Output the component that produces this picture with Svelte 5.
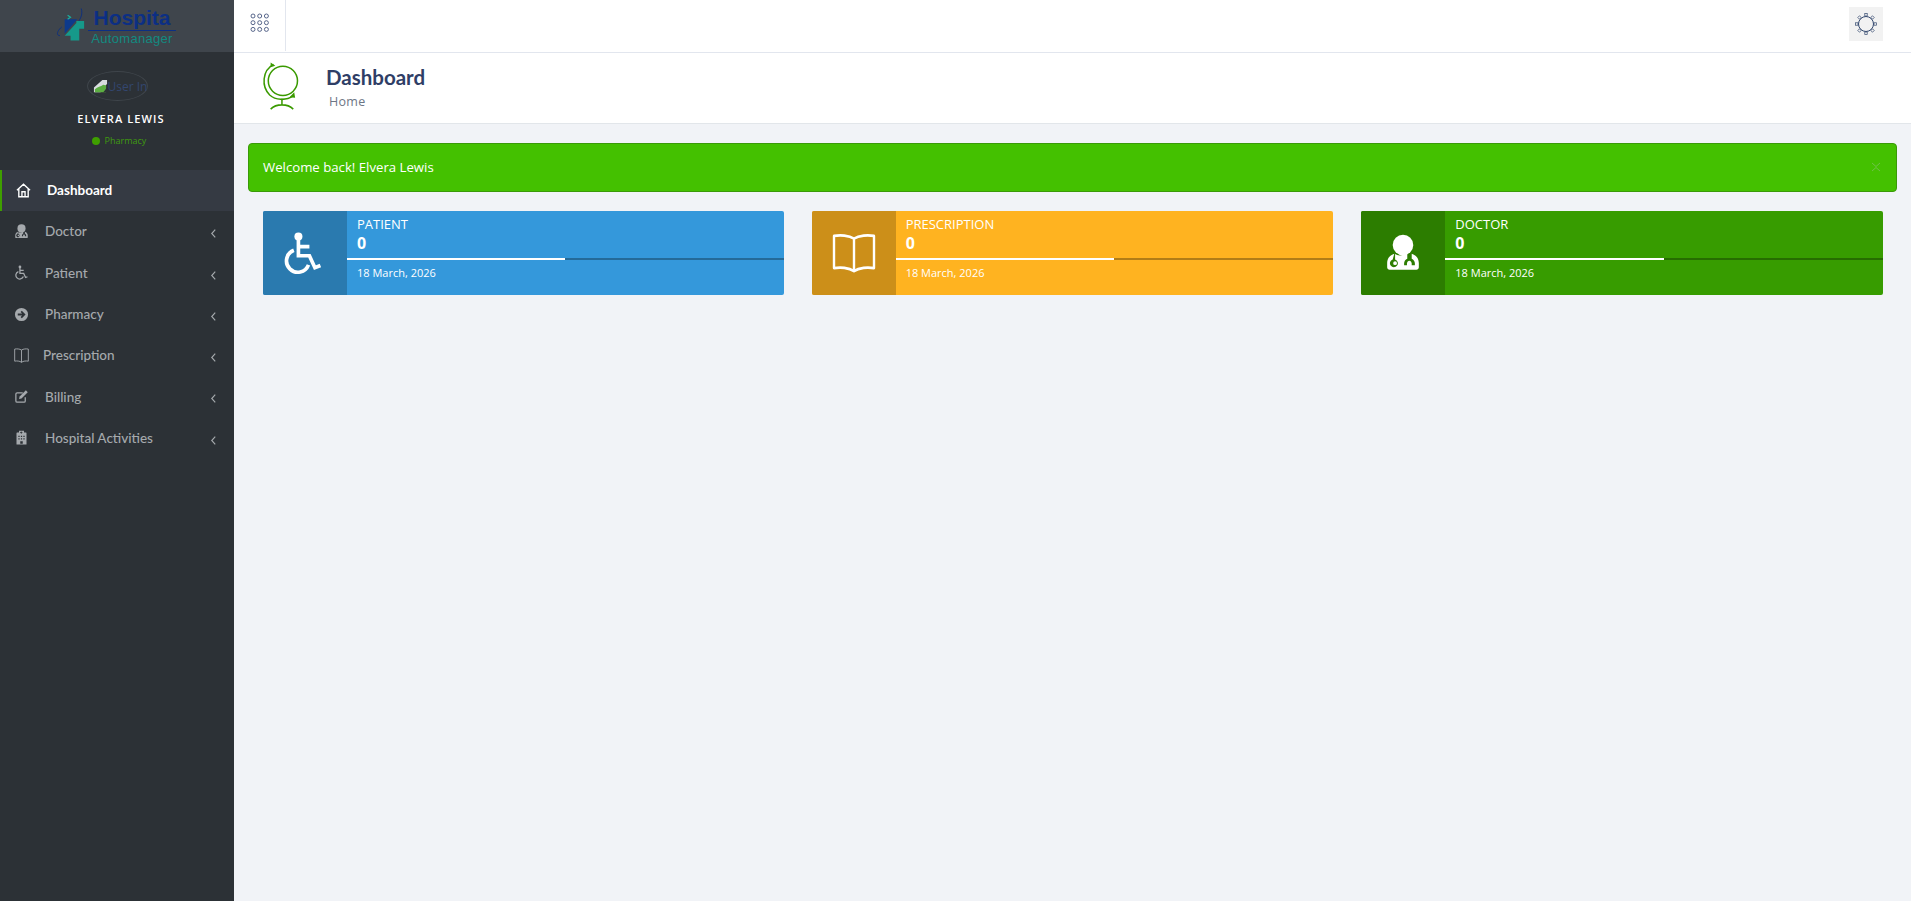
<script>
  const menu = [
    { label: 'Doctor', icon: 'doctor', cls: '' },
    { label: 'Patient', icon: 'wheel', cls: '' },
    { label: 'Pharmacy', icon: 'arrow', cls: '' },
    { label: 'Prescription', icon: 'book', cls: 'tight' },
    { label: 'Billing', icon: 'edit', cls: '' },
    { label: 'Hospital Activities', icon: 'hosp', cls: '' }
  ];
  const cards = [
    { title: 'PATIENT', icon: 'wheel', cls: 'blue' },
    { title: 'PRESCRIPTION', icon: 'book', cls: 'amber' },
    { title: 'DOCTOR', icon: 'doctor', cls: 'green' }
  ];
</script>

{#snippet icon(name)}
  <svg viewBox={name === 'book' ? '1 3 22 18' : '0 0 24 24'} preserveAspectRatio={name === 'book' ? 'none' : 'xMidYMid meet'} class="ic" aria-hidden="true">
    {#if name === 'wheel'}
      <circle cx="9.500" cy="3" r="2.200" fill="currentColor" />
      <path d="M9.500 4v9.500h6l3 6.500 3-1.200M9.500 8.500h6" fill="none" stroke="currentColor" stroke-width="2" />
      <path d="M7 10.500a6.200 6.200 0 1 0 8 8" fill="none" stroke="currentColor" stroke-width="2" />
    {:else if name === 'book'}
      <path d="M12 5.500C9.500 4 5 3.800 2 4.300v14.500c3-.5 7.500-.3 10 1.400 2.500-1.700 7-1.900 10-1.400V4.300c-3-.5-7.500-.3-10 1.200zM12 5.500v14.700" fill="none" stroke="currentColor" stroke-width="1.200" stroke-linejoin="round" />
    {:else if name === 'doctor'}
      <circle cx="12" cy="7" r="6.500" fill="currentColor" />
      <path fill-rule="evenodd" fill="currentColor" d="M6.500 12.500C3.500 13.500 2 15.500 2 18.500V21c0 .8.700 1.500 1.500 1.500h17c.8 0 1.500-.7 1.500-1.500v-2.500c0-3-1.500-5-4.500-6v3.200c1.200.5 2 1.700 2 3v1h-2v-1c0-1-.8-1.800-1.500-1.800s-1.500.8-1.500 1.800v1h-1.800v-1c0-1.400.8-2.600 2-3v-3.700c-1.500 1-3.200 1.500-4.700 1.500s-2-.3-3-.8v3.400a2.500 2.500 0 1 1-1.500 0zM7 17.200a1.200 1.200 0 1 0 0 2.400 1.200 1.200 0 0 0 0-2.400z" />
    {:else if name === 'arrow'}
      <path fill-rule="evenodd" fill="currentColor" d="M12 1.500a10.500 10.500 0 1 0 0 21 10.500 10.500 0 0 0 0-21zM12.500 6l6 6-6 6-2-2 2.500-2.500H6v-3h7l-2.500-2.500z" />
    {:else if name === 'edit'}
      <path d="M18 13v6a2 2 0 0 1-2 2H5a2 2 0 0 1-2-2V8a2 2 0 0 1 2-2h9" fill="none" stroke="currentColor" stroke-width="2" />
      <path d="M9 12 19 2l3 3-10 10-4 1z" fill="currentColor" />
    {:else if name === 'hosp'}
      <path fill-rule="evenodd" fill="currentColor" d="M8 1h8v3h3a1 1 0 0 1 1 1v18H4V5a1 1 0 0 1 1-1h3zM11 2.200v1.300H9.700v1.200H11V6h1.200V4.700h1.300V3.500h-1.300V2.200zM7 9v2h2V9zm4 0v2h2V9zm4 0v2h2V9zM7 13v2h2v-2zm4 0v2h2v-2zm4 0v2h2v-2zm-5 5v4h4v-4z" />
    {:else if name === 'home'}
      <path d="M1.500 11.500 12 2l10.500 9.500M4.500 9v13h15V9M9.500 22v-8h5v8" fill="none" stroke="currentColor" stroke-width="2.200" />
    {/if}
  </svg>
{/snippet}

<div class="app">
  <aside class="side">
    <div class="logo">
      <svg viewBox="0 0 34 36" class="logomark" aria-hidden="true">
        <path d="M5 30C1 30 2 25 7 21" fill="none" stroke="#0d2f7e" stroke-width="1" />
        <path d="M10 13h13l-13 15z" fill="#0d3a8c" />
        <path d="M27 2c2 6-1 12-5 16" fill="none" stroke="#0d2f7e" stroke-width="1" />
        <path d="M22 15h8v8h-5v12h-9v-5h-6l12-13z" fill="#16998a" />
        <path d="M13 9l3 2-3 2" fill="none" stroke="#19b0a0" stroke-width="1.200" />
      </svg>
      <div class="logotext">
        <div class="hosp">Hospita</div>
        <div class="auto">Automanager</div>
      </div>
    </div>

    <div class="user">
      <div class="avatar">
        <svg viewBox="0 0 16 16" class="broken" aria-hidden="true">
          <path d="M1 9 10 1h5v4l-7 9H1z" fill="#d9dde0" />
          <path d="M2 11c3-3 6-3 9-5l3 1v7H2z" fill="#5cae42" />
          <path d="M11 14l4-5v5z" fill="#2c3136" />
        </svg>
        <span>User In</span>
      </div>
      <div class="uname">ELVERA LEWIS</div>
      <div class="role"><i></i>Pharmacy</div>
    </div>

    <nav class="nav">
      <a class="item active">
        <span class="nic">{@render icon('home')}</span>
        <span class="lab">Dashboard</span>
      </a>
      {#each menu as m}
        <a class="item {m.cls}">
          <span class="nic">{@render icon(m.icon)}</span>
          <span class="lab">{m.label}</span>
          <svg viewBox="0 0 8 12" class="chev" aria-hidden="true"><path d="M6 1.500 2 6l4 4.500" fill="none" stroke="currentColor" stroke-width="1.300" /></svg>
        </a>
      {/each}
    </nav>
  </aside>

  <div class="main">
    <header class="top">
      <button class="grid-btn" aria-label="Menu">
        <svg viewBox="0 0 20 20" width="20" height="20" aria-hidden="true">
          {#each [0, 1, 2] as r}
            {#each [0, 1, 2] as c}
              <circle cx={3 + c * 6.700} cy={3 + r * 6.700} r="2" fill="none" stroke="#46567e" stroke-width=".9" />
            {/each}
          {/each}
        </svg>
      </button>
      <button class="gear" aria-label="Settings">
        <svg viewBox="0 0 24 24" width="24" height="24" aria-hidden="true">
          <circle cx="12" cy="12" r="7.500" fill="none" stroke="#34496f" stroke-width="1" />
          {#each [0, 45, 90, 135, 180, 225, 270, 315] as a}
            <rect x="10.800" y="1.600" width="2.400" height="2.400" fill="none" stroke="#34496f" stroke-width=".7" transform="rotate({a} 12 12)" />
          {/each}
        </svg>
      </button>
    </header>

    <section class="pagehead">
      <svg viewBox="0 0 42 52" class="globe" aria-hidden="true">
        <circle cx="23" cy="20" r="15.500" fill="none" stroke="#3a9a00" stroke-width="1.600" />
        <path d="M13 2.500C1 9 0 26 9 35c6 5.500 17 6.500 25 1" fill="none" stroke="#3a9a00" stroke-width="1.600" />
        <path d="M10 .5l5 3.500-5 1.500zM35 32l1 6-6-.5z" fill="#3a9a00" />
        <path d="M22 39v6M10 50c6-6 18-6 24 0" fill="none" stroke="#3a9a00" stroke-width="1.600" />
      </svg>
      <div class="titles">
        <h1>Dashboard</h1>
        <div class="crumb">Home</div>
      </div>
    </section>

    <div class="content">
      <div class="alert">
        <span>Welcome back! Elvera Lewis</span>
        <svg viewBox="0 0 10 10" class="close" aria-hidden="true"><path d="M1 1l4 3.500L9 1M1 9l4-3.500L9 9" stroke="#6fc24a" stroke-width="1" fill="none" /></svg>
      </div>

      <div class="cards">
        {#each cards as c}
          <div class="col">
            <div class="card {c.cls}">
              <div class="cic">{@render icon(c.icon)}</div>
              <div class="cbody">
                <div class="ctitle">{c.title}</div>
                <div class="cnum">0</div>
                <div class="bar"><div class="fill"></div></div>
                <div class="cdate">18 March, 2026</div>
              </div>
            </div>
          </div>
        {/each}
      </div>
    </div>
  </div>
</div>

<style>
  :global(body) {
    margin: 0;
    background: #f1f3f7;
    font-family: "Open Sans", "Noto Sans", sans-serif;
  }
  .app {
    display: flex;
    height: 901px;
    overflow: hidden;
  }
  .side {
    width: 234px;
    flex: none;
    background: #2c3136;
    display: flex;
    flex-direction: column;
  }
  .logo {
    height: 52px;
    background: #3f454c;
    display: flex;
    align-items: flex-start;
    padding-left: 55px;
    box-sizing: border-box;
  }
  .logomark {
    width: 33px;
    height: 36px;
    margin-top: 6px;
  }
  .logotext {
    display: flex;
    flex-direction: column;
    align-items: center;
    width: 88px;
  }
  .hosp {
    font-family: "Liberation Sans", sans-serif;
    font-weight: 700;
    font-size: 21px;
    line-height: 24px;
    color: #0c2f84;
    margin-top: 6px;
    width: 100%;
    text-align: center;
    border-bottom: 1px solid #0c2f84;
    height: 24px;
  }
  .auto {
    font-family: "Liberation Sans", sans-serif;
    font-size: 13px;
    line-height: 14px;
    color: #128a80;
    letter-spacing: .3px;
    margin-top: 1px;
  }
  .user {
    display: flex;
    flex-direction: column;
    align-items: center;
    padding-top: 19px;
    height: 119px;
    box-sizing: border-box;
  }
  .avatar {
    width: 61px;
    height: 30px;
    box-sizing: border-box;
    border: 1px solid #3f454b;
    border-radius: 50%;
    display: flex;
    align-items: center;
    padding-left: 5px;
    color: #33466f;
    font-size: 12px;
    white-space: nowrap;
  }
  .broken { width: 15px; height: 15px; flex: none; }
  .uname {
    color: #fff;
    font-size: 11px;
    font-weight: 600;
    letter-spacing: 1.100px;
    line-height: 14px;
    margin-top: 11px;
    padding-left: 8px;
  }
  .role {
    display: flex;
    align-items: center;
    gap: 5px;
    color: #3f9a0f;
    font-size: 9px;
    line-height: 12px;
    margin-top: 9px;
    padding-left: 4px;
  }
  .role i {
    width: 8px;
    height: 8px;
    border-radius: 50%;
    background: #3f9f00;
  }
  .nav { display: flex; flex-direction: column; margin-top: -1px; }
  .item {
    height: 41.300px;
    display: flex;
    align-items: center;
    position: relative;
    color: #a5a9ad;
    font-family: Lato, "Open Sans", sans-serif;
    font-size: 13.500px;
    font-weight: 500;
    padding-left: 14px;
    padding-bottom: 1px;
    box-sizing: border-box;
  }
  .active {
    background: #353a43;
    border-left: 2px solid #3f9f00;
    color: #fff;
    font-weight: 700;
  }
  .nic {
    width: 15px;
    height: 15px;
    display: flex;
    margin-right: 16px;
  }
  .tight .nic { margin-right: 14px; }
  .ic { width: 100%; height: 100%; display: block; }
  .chev {
    position: absolute;
    right: 17px;
    top: 17px;
    width: 7px;
    height: 11px;
  }
  .main {
    flex: 1;
    min-width: 0;
    display: flex;
    flex-direction: column;
  }
  .top {
    height: 53px;
    box-sizing: border-box;
    background: #fff;
    border-bottom: 1px solid #e2e6ee;
    display: flex;
    align-items: flex-start;
    justify-content: space-between;
  }
  .grid-btn {
    width: 52px;
    height: 51px;
    border: 0;
    border-right: 1px solid #e2e6ee;
    background: #fff;
    padding: 0 0 5px;
    display: flex;
    align-items: center;
    justify-content: center;
  }
  .gear {
    width: 34px;
    height: 34px;
    margin: 7px 28px 0 0;
    border: 0;
    padding: 0;
    background: #f2f2f2;
    display: flex;
    align-items: center;
    justify-content: center;
  }
  .pagehead {
    height: 71px;
    box-sizing: border-box;
    background: #fff;
    border-bottom: 1px solid #e2e6ea;
    display: flex;
    align-items: flex-start;
    padding-left: 27px;
  }
  .globe {
    width: 40px;
    height: 49px;
    margin-top: 9px;
  }
  .titles { margin-left: 25px; }
  h1 {
    margin: 10px 0 0;
    color: #2f3e66;
    font-family: Lato, "Open Sans", sans-serif;
    font-size: 20.500px;
    font-weight: 700;
    line-height: 28px;
  }
  .crumb {
    color: #6d7685;
    font-size: 12.500px;
    font-weight: 500;
    letter-spacing: .3px;
    line-height: 16px;
    margin: 3px 0 0 3px;
  }
  .content { padding: 19px 14px 0; }
  .alert {
    height: 49px;
    box-sizing: border-box;
    background: #44c100;
    border: 1px solid #3a9a08;
    border-radius: 4px;
    color: #fff;
    font-size: 13.200px;
    display: flex;
    align-items: center;
    justify-content: space-between;
    padding: 0 14px 1px;
  }
  .close { width: 10px; height: 10px; margin-right: 1px; }
  .cards {
    display: grid;
    grid-template-columns: repeat(3, 1fr);
    margin-top: 19px;
  }
  .col { padding: 0 14px; }
  .col:first-child { padding-left: 15px; }
  .card {
    height: 84px;
    display: flex;
    border-radius: 2px;
    color: #fff;
    overflow: hidden;
  }
  .cic {
    width: 84px;
    flex: none;
    display: flex;
    align-items: center;
    justify-content: center;
  }
  .cic .ic { width: 44px; height: 44px; }
  .blue .cic .ic { transform: translateX(-2px); }
  .amber .cic .ic { height: 40px; }
  .green .cic .ic { width: 38px; height: 38px; }
  .cbody { flex: 1; min-width: 0; }
  .ctitle {
    font-size: 13px;
    line-height: 16px;
    margin: 5px 0 0 10px;
  }
  .cnum {
    font-size: 16px;
    font-weight: 700;
    line-height: 20px;
    margin: 1px 0 0 10px;
  }
  .bar {
    height: 2px;
    margin-top: 5px;
    background: rgba(0, 0, 0, .3);
  }
  .fill { width: 50%; height: 100%; background: #fff; }
  .cdate {
    font-size: 11px;
    font-weight: 500;
    line-height: 14px;
    margin: 6px 0 0 10px;
  }
  .blue { background: #3498db; }
  .blue .cic { background: #2a7aaf; }
  .amber { background: #ffb320; }
  .amber .cic { background: #cc8f19; }
  .green { background: #379c00; }
  .green .cic { background: #2c7d00; }
</style>
